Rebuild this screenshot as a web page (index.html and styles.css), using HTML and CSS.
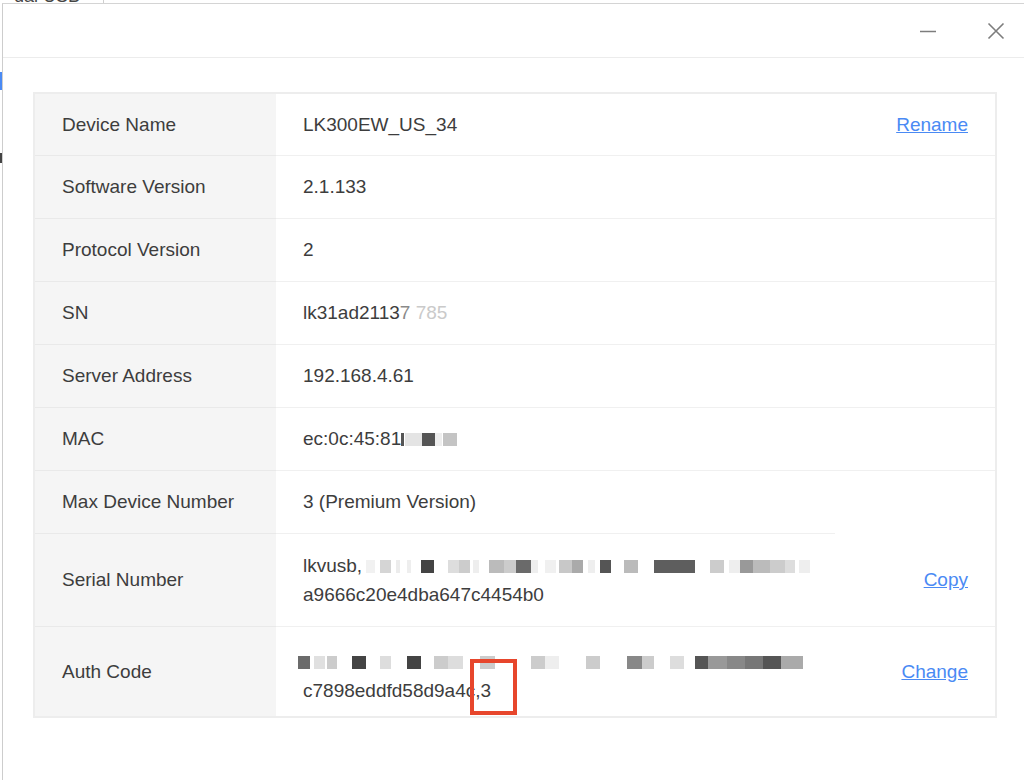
FILE: index.html
```html
<!DOCTYPE html>
<html lang="en">
<head>
    <meta charset="UTF-8">
    <title>Device Information</title>
    <link rel="stylesheet" href="styles.css">
</head>
<body>
    <!-- window behind the dialog -->
    <div class="desk-title">dal USB</div>
    <div class="desk-rule"></div>
    <div class="desk-tab"></div>
    <div class="desk-mark"></div>

    <div class="dialog">
        <div class="dialog-head">
            <button class="head-btn" title="Minimize">
                <svg width="18" height="18" viewBox="0 0 18 18"><line x1="1" y1="9.5" x2="17" y2="9.5" stroke="#7d7d7d" stroke-width="1.5"/></svg>
            </button>
            <button class="head-btn" title="Close">
                <svg width="18" height="18" viewBox="0 0 18 18"><path d="M1.5 1.5 L16.5 16.5 M16.5 1.5 L1.5 16.5" stroke="#7d7d7d" stroke-width="1.6" fill="none"/></svg>
            </button>
        </div>

        <div class="info">
            <div class="row first">
                <div class="cell label">Device Name</div>
                <div class="cell value">LK300EW_US_34</div>
                <div class="cell action"><a href="#">Rename</a></div>
            </div>
            <div class="row">
                <div class="cell label">Software Version</div>
                <div class="cell value">2.1.133</div>
                <div class="cell action"></div>
            </div>
            <div class="row">
                <div class="cell label">Protocol Version</div>
                <div class="cell value">2</div>
                <div class="cell action"></div>
            </div>
            <div class="row">
                <div class="cell label">SN</div>
                <div class="cell value">lk31ad2113<span class="fade">7</span><span class="fade light">&nbsp;785</span></div>
                <div class="cell action"></div>
            </div>
            <div class="row">
                <div class="cell label">Server Address</div>
                <div class="cell value">192.168.4.61</div>
                <div class="cell action"></div>
            </div>
            <div class="row">
                <div class="cell label">MAC</div>
                <div class="cell value">ec:0c:45:81<span class="mosaic mac"></span></div>
                <div class="cell action"></div>
            </div>
            <div class="row">
                <div class="cell label">Max Device Number</div>
                <div class="cell value">3 (Premium Version)</div>
                <div class="cell action"></div>
            </div>
            <div class="row split tall">
                <div class="cell label">Serial Number</div>
                <div class="cell value lines">
                    <div>lkvusb,<span class="mosaic serial"></span></div>
                    <div>a9666c20e4dba647c4454b0</div>
                </div>
                <div class="cell action"><a href="#">Copy</a></div>
            </div>
            <div class="row tall last">
                <div class="cell label">Auth Code</div>
                <div class="cell value lines auth">
                    <div><span class="mosaic code"></span></div>
                    <div>c7898eddfd58d9a4c,3</div>
                    <span class="mark"></span>
                </div>
                <div class="cell action"><a href="#">Change</a></div>
            </div>
        </div>
    </div>
</body>
</html>
```

FILE: styles.css
```css
* {
    box-sizing: border-box;
}
body {
    margin: 0;
    height: 780px;
    overflow: hidden;
    position: relative;
    background-color: #fff;
    font-family: "Liberation Sans", Arial, sans-serif;
    color: #3d3d3d;
}
.desk-title {
    position: absolute;
    top: -14px;
    left: 14px;
    font-size: 18px;
    color: #444;
}
.desk-rule {
    position: absolute;
    top: 0;
    left: 103px;
    width: 1px;
    height: 4px;
    background-color: #cfcfcf;
}
.desk-tab {
    position: absolute;
    top: 72px;
    left: 0;
    width: 2px;
    height: 18px;
    background-color: #4a8af4;
}
.desk-mark {
    position: absolute;
    top: 153px;
    left: 0;
    width: 2px;
    height: 10px;
    background-color: #444;
}
.dialog {
    position: relative;
    z-index: 1;
    margin: 3px 0 0 2px;
    width: 1022px;
    height: 800px;
    background-color: #fff;
    border-top: 1px solid #d4d4d4;
    border-left: 1px solid #cdcdcd;
}
.dialog-head {
    height: 54px;
    border-bottom: 1px solid #ececec;
    display: flex;
    justify-content: flex-end;
    align-items: center;
    gap: 36px;
    padding-right: 12px;
}
.head-btn {
    width: 32px;
    height: 32px;
    padding: 0;
    border: none;
    background: none;
    display: flex;
    align-items: center;
    justify-content: center;
    cursor: pointer;
}
.info {
    margin: 34px 0 0 30px;
    width: 964px;
    border: 2px solid #ededed;
    font-size: 19px;
}
.row {
    display: grid;
    grid-template-columns: 241px 1fr auto;
    height: 63px;
}
.row.first {
    height: 61px;
}
.row.tall {
    height: 93px;
}
.row.last {
    height: 90px;
}
.row.split {
    grid-template-columns: 241px 559px 1fr;
}
.cell {
    display: flex;
    align-items: center;
    border-top: 1px solid #f0f0f0;
}
.row.first .cell {
    border-top: none;
}
.label {
    padding-left: 27px;
    background-color: #f5f5f5;
    border-top-color: #e9e9e9;
}
.value {
    padding-left: 27px;
}
.action {
    justify-content: flex-end;
    padding-right: 27px;
}
.row.split .action {
    border-top-color: transparent;
}
.action a {
    color: #4a8af4;
    text-decoration: underline;
}
.lines {
    flex-direction: column;
    align-items: flex-start;
    justify-content: center;
    line-height: 29px;
    position: relative;
}
.lines.auth {
    padding-top: 8px;
}
.fade {
    color: #8a8a8a;
}
.fade.light {
    color: #cacaca;
}
.mosaic {
    display: inline-block;
    height: 13px;
    vertical-align: middle;
}
.mosaic.mac {
    width: 56px;
    background: linear-gradient(to right,
        #555 0 3px, #fff 3px 4px, #e4e4e4 4px 21px, #555 21px 34px,
        #eee 34px 41px, #fff 41px 42px, #c4c4c4 42px 56px);
}
.mosaic.serial {
    width: 444px;
    margin-left: 4px;
    background: linear-gradient(to right,
        #f1f1f1 0 9px, #fff 9px 14px, #d5d5d5 14px 25px, #fff 25px 30px,
        #ececec 30px 34px, #fff 34px 41px, #eee 41px 45px, #fff 45px 55px,
        #444 55px 68px, #fff 68px 82px, #ddd 82px 93px, #ccc 93px 104px,
        #fff 104px 107px, #eee 107px 113px, #fff 113px 123px, #bbb 123px 138px,
        #ccc 138px 150px, #6a6a6a 150px 165px, #eee 165px 172px, #fff 172px 179px,
        #f0f0f0 179px 190px, #fff 190px 193px, #c8c8c8 193px 206px, #aaa 206px 217px,
        #fff 217px 222px, #eee 222px 229px, #fff 229px 234px, #555 234px 245px,
        #fff 245px 258px, #bbb 258px 272px, #fff 272px 288px, #5e5e5e 288px 329px,
        #fff 329px 344px, #ccc 344px 358px, #fff 358px 363px, #eee 363px 374px,
        #999 374px 387px, #bbb 387px 404px, #ccc 404px 419px, #ddd 419px 429px,
        #fff 429px 433px, #eee 433px 444px);
}
.mosaic.code {
    width: 505px;
    margin-left: -5px;
    background: linear-gradient(to right,
        #6b6b6b 0 12px, #fff 12px 16px, #e0e0e0 16px 27px, #fff 27px 29px,
        #ccc 29px 39px, #fff 39px 54px, #444 54px 68px, #fff 68px 82px,
        #ddd 82px 93px, #fff 93px 109px, #444 109px 123px, #fff 123px 136px,
        #ccc 136px 150px, #ddd 150px 165px, #fff 165px 182px, #ccc 182px 197px,
        #fff 197px 233px, #ccc 233px 247px, #eee 247px 261px, #fff 261px 288px,
        #ccc 288px 302px, #fff 302px 329px, #888 329px 344px, #ccc 344px 356px,
        #fff 356px 372px, #ddd 372px 386px, #fff 386px 397px, #555 397px 410px,
        #999 410px 429px, #888 429px 447px, #777 447px 465px, #555 465px 483px,
        #aaa 483px 505px);
}
.mark {
    position: absolute;
    left: 194px;
    top: 32px;
    width: 47px;
    height: 56px;
    border: 4px solid #e7462c;
}
```
